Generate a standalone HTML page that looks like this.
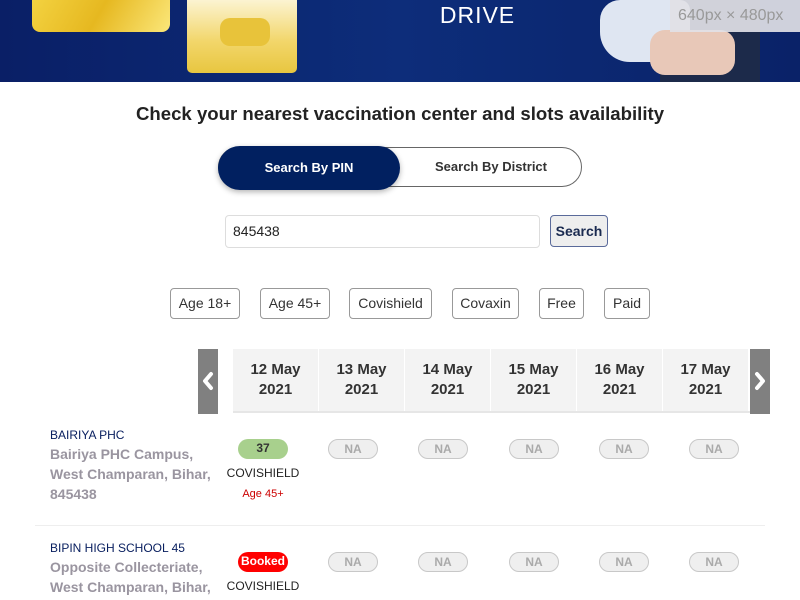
<!DOCTYPE html>
<html><head><meta charset="utf-8"><style>
*{margin:0;padding:0;box-sizing:border-box}
body{width:800px;height:600px;overflow:hidden;background:#fff;font-family:"Liberation Sans",Arial,sans-serif;position:relative}
.a{position:absolute}
.banner{left:0;top:0;width:800px;height:82px;background:linear-gradient(90deg,#0a1f66 0%,#0d2d7a 50%,#0a2268 100%);overflow:hidden}
.pill{position:absolute;height:20px;border-radius:10px;font-size:12px;font-weight:bold;text-align:center;line-height:18px}
.na{width:50px;border:1px solid #c8c8c8;background:#efefef;color:#aaa}
.date{position:absolute;top:349px;width:85px;height:62px;background:#f3f3f3;text-align:center;font-weight:bold;font-size:15px;color:#333;line-height:20px;padding-top:11px}
.flt{position:absolute;top:288px;height:31px;border:1px solid #999;border-radius:4px;font-size:14px;color:#333;line-height:29px;text-align:center}
.nm{font-size:12px;color:#0a2060}
.ad{font-size:14px;font-weight:bold;color:#9a95a0;line-height:20px}
.arr{position:absolute;top:349px;width:20px;height:65px;background:#808080}
</style></head><body>
<div class="a banner">
 <div class="a" style="left:32px;top:-10px;width:138px;height:42px;border-radius:8px;background:linear-gradient(120deg,#f4d443,#e6b820 50%,#fbe77a)"></div>
 <div class="a" style="left:187px;top:-6px;width:110px;height:79px;border-radius:5px;background:linear-gradient(180deg,#fdf8e0,#f2d66a 60%,#e8c640)"></div>
 <div class="a" style="left:220px;top:18px;width:50px;height:28px;border-radius:10px;background:#e8c33a"></div>
 <div class="a" style="left:405px;top:2px;width:145px;text-align:center;color:#fff;font-size:23px;letter-spacing:1px">DRIVE</div>
 <div class="a" style="left:660px;top:-5px;width:100px;height:87px;background:#1c2a4a"></div>
 <div class="a" style="left:600px;top:0px;width:90px;height:62px;border-radius:20px 10px 20px 30px;background:#dfe6f2"></div>
 <div class="a" style="left:650px;top:30px;width:85px;height:45px;border-radius:15px;background:#e8c8b8"></div>
 <div class="a" style="left:670px;top:0;width:130px;height:32px;background:rgba(225,225,230,0.92);color:#999;font-size:16px;line-height:32px;padding-left:8px">640px × 480px</div>
</div>
<div class="a" style="left:0;top:103px;width:800px;text-align:center;font-size:18.6px;font-weight:bold;color:#222">Check your nearest vaccination center and slots availability</div>
<div class="a" style="left:218px;top:147px;width:364px;height:40px;border:1px solid #666;border-radius:20px"></div>
<div class="a" style="left:218px;top:146px;width:182px;height:44px;border-radius:22px;background:#012060;color:#fff;font-weight:bold;font-size:13px;text-align:center;line-height:44px;box-shadow:0 2px 6px rgba(0,0,0,.3)">Search By PIN</div>
<div class="a" style="left:400px;top:147px;width:182px;height:40px;color:#333;font-weight:bold;font-size:13px;text-align:center;line-height:40px">Search By District</div>
<div class="a" style="left:225px;top:215px;width:315px;height:33px;border:1px solid #ddd;border-radius:4px;font-size:14px;color:#222;line-height:31px;padding-left:7px">845438</div>
<div class="a" style="left:550px;top:215px;width:58px;height:32px;border:1px solid #5a6a9a;border-radius:4px;background:#eee;font-size:14px;font-weight:bold;color:#1a2a50;text-align:center;line-height:30px">Search</div>
<div class="flt" style="left:170px;width:70px">Age 18+</div>
<div class="flt" style="left:260px;width:70px">Age 45+</div>
<div class="flt" style="left:349px;width:83px">Covishield</div>
<div class="flt" style="left:452px;width:67px">Covaxin</div>
<div class="flt" style="left:539px;width:45px">Free</div>
<div class="flt" style="left:604px;width:46px">Paid</div>
<div class="a" style="left:233px;top:411px;width:517px;height:2px;background:#e6e6e6"></div>
<div class="date" style="left:233px">12 May<br>2021</div>
<div class="date" style="left:319px">13 May<br>2021</div>
<div class="date" style="left:405px">14 May<br>2021</div>
<div class="date" style="left:491px">15 May<br>2021</div>
<div class="date" style="left:577px">16 May<br>2021</div>
<div class="date" style="left:663px">17 May<br>2021</div>
<div class="arr" style="left:198px"><svg width="20" height="65"><path d="M13 25 L7 32 L13 39" stroke="#fff" stroke-width="4" fill="none" stroke-linecap="round" stroke-linejoin="round"/></svg></div>
<div class="arr" style="left:750px"><svg width="20" height="65"><path d="M7 25 L13 32 L7 39" stroke="#fff" stroke-width="4" fill="none" stroke-linecap="round" stroke-linejoin="round"/></svg></div>
<div class="a" style="left:50px;top:428px;width:170px"><div class="nm">BAIRIYA PHC</div><div class="ad" style="margin-top:2px">Bairiya PHC Campus, West Champaran, Bihar, 845438</div></div>
<div class="pill" style="left:238px;top:439px;width:50px;background:#a8d08d;color:#333">37</div>
<div class="a" style="left:213px;top:466px;width:100px;text-align:center;font-size:12px;color:#222">COVISHIELD</div>
<div class="a" style="left:213px;top:488px;width:100px;text-align:center;font-size:11px;color:#c00">Age 45+</div>
<div class="pill na" style="left:328px;top:439px">NA</div>
<div class="pill na" style="left:418px;top:439px">NA</div>
<div class="pill na" style="left:509px;top:439px">NA</div>
<div class="pill na" style="left:599px;top:439px">NA</div>
<div class="pill na" style="left:689px;top:439px">NA</div>
<div class="a" style="left:35px;top:525px;width:730px;height:1px;background:#eee"></div>
<div class="a" style="left:50px;top:541px;width:170px"><div class="nm">BIPIN HIGH SCHOOL 45</div><div class="ad" style="margin-top:2px">Opposite Collecteriate, West Champaran, Bihar,</div></div>
<div class="pill" style="left:238px;top:552px;width:50px;background:#f00;color:#fff">Booked</div>
<div class="a" style="left:213px;top:579px;width:100px;text-align:center;font-size:12px;color:#222">COVISHIELD</div>
<div class="pill na" style="left:328px;top:552px">NA</div>
<div class="pill na" style="left:418px;top:552px">NA</div>
<div class="pill na" style="left:509px;top:552px">NA</div>
<div class="pill na" style="left:599px;top:552px">NA</div>
<div class="pill na" style="left:689px;top:552px">NA</div>
</body></html>
